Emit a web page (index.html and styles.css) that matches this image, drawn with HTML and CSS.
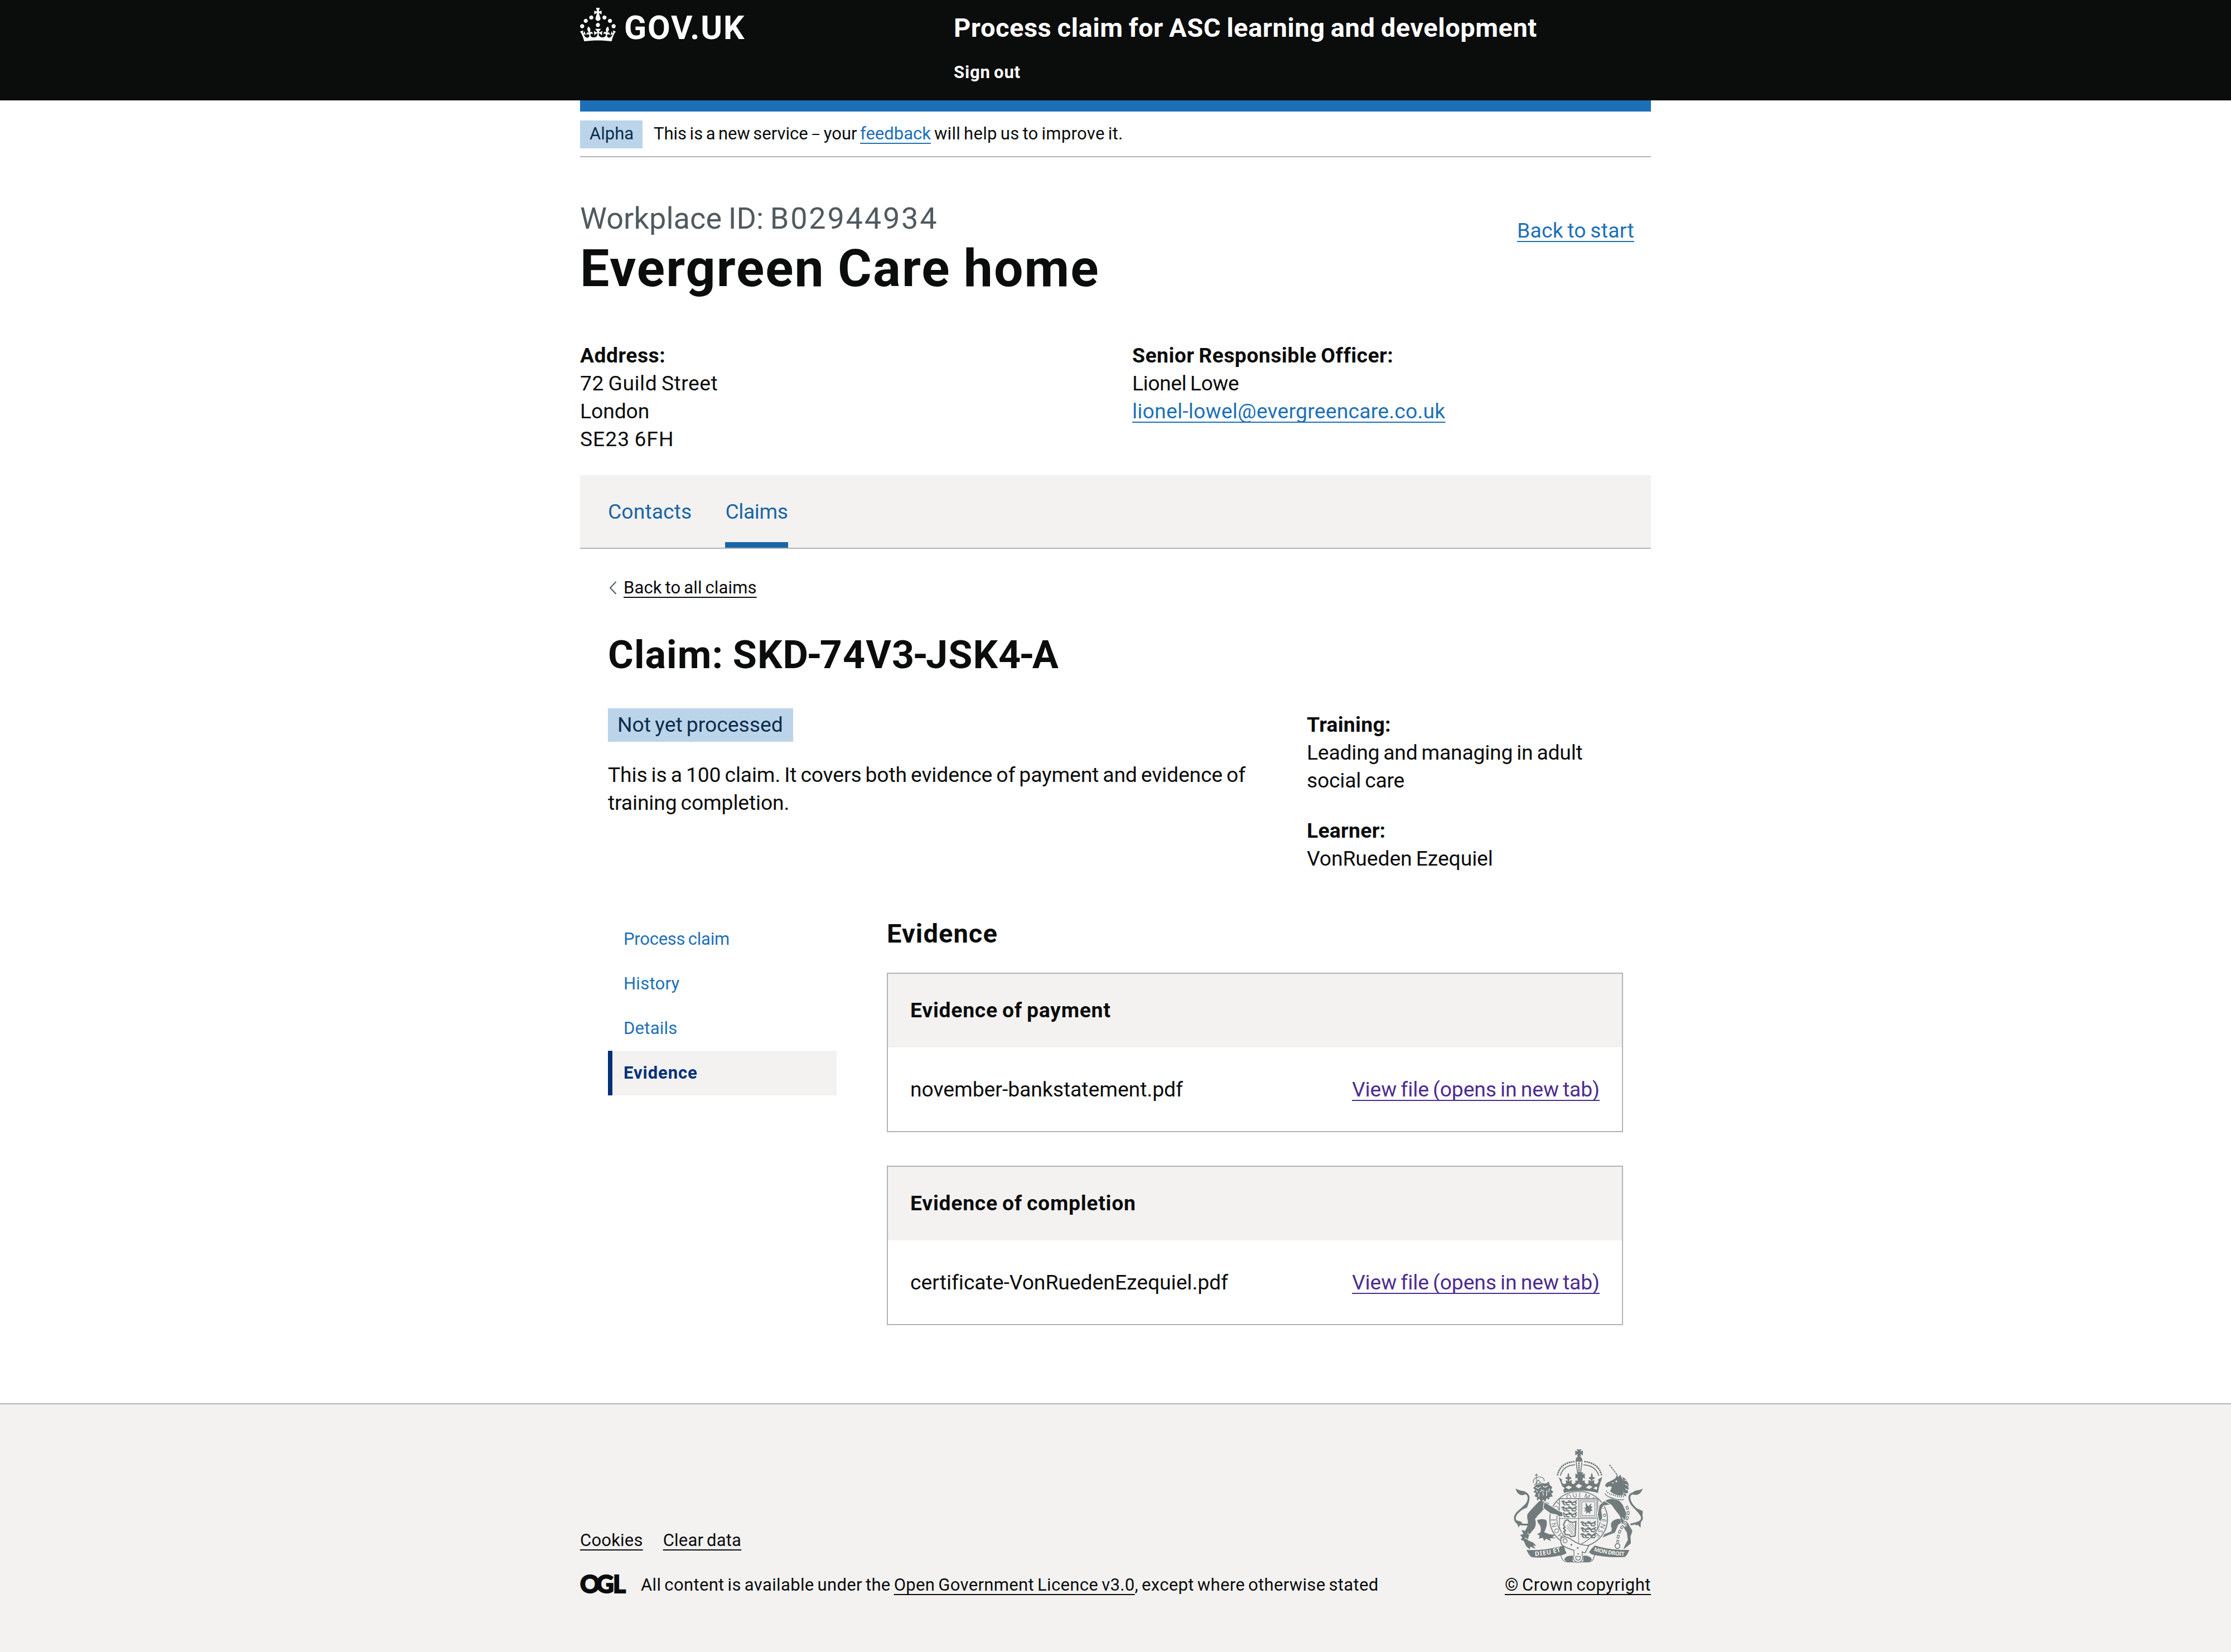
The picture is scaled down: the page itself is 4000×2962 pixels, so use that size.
FILE: index.html
```html
<!DOCTYPE html>
<html lang="en">
<head>
<meta charset="utf-8">
<title>Claim SKD-74V3-JSK4-A</title>
<link rel="stylesheet" href="styles.css">
</head>
<body>
<header class="header">
  <div class="container header-inner">
    <a class="logo" href="#">
      <svg class="logo-crown" viewBox="0 0 32 30" aria-hidden="true"><path fill="currentColor" d="M22.6 10.4c-1 .4-2-.1-2.4-1-.4-.9.1-2 1-2.4.9-.4 2 .1 2.4 1s-.1 2-1 2.4m-5.9 6.7c-.9.4-2-.1-2.4-1-.4-.9.1-2 1-2.4.9-.4 2 .1 2.4 1s-.1 2-1 2.4m10.8-3.7c-1 .4-2-.1-2.4-1-.4-.9.1-2 1-2.4.9-.4 2 .1 2.4 1s0 2-1 2.4m3.3 4.8c-1 .4-2-.1-2.4-1-.4-.9.1-2 1-2.4.9-.4 2 .1 2.4 1s-.1 2-1 2.4M17 4.7l2.3 1.2V2.5l-2.3.7-.2-.2.9-3h-3.4l.9 3-.2.2c-.1.1-2.3-.7-2.3-.7v3.4L15 4.7c.1.1.1.2.2.2l-1.3 4c-.1.2-.1.4-.1.6 0 1.1.8 2 1.9 2.2h.7c1-.2 1.9-1.1 1.9-2.1 0-.2 0-.4-.1-.6l-1.3-4c-.1-.2 0-.2.1-.3m-7.6 5.7c.9.4 2-.1 2.4-1 .4-.9-.1-2-1-2.4-.9-.4-2 .1-2.4 1s0 2 1 2.4m-5 3c.9.4 2-.1 2.4-1 .4-.9-.1-2-1-2.4-.9-.4-2 .1-2.4 1s.1 2 1 2.4m-3.2 4.8c.9.4 2-.1 2.4-1 .4-.9-.1-2-1-2.4-.9-.4-2 .1-2.4 1s0 2 1 2.4m14.8 11c4.4 0 8.6.3 12.3.8 1.1-4.5 2.4-7 3.7-8.8l-2.5-.9c.2 1.3.3 1.9 0 2.7-.4-.4-.8-1.1-1.1-2.3l-1.2 4c.7-.5 1.3-.8 2-.9-1.1 2.5-2.6 3.1-3.5 3-1.1-.2-1.7-1.2-1.5-2.1.3-1.2 1.5-1.5 2.1-.1 1.1-2.3-.8-3-2-2.3 1.9-1.9 2.1-3.5.6-5.6-2.1 1.6-2.1 3.2-1.2 5.5-1.2-1.4-3.2-.6-2.5 1.6.9-1.4 2.1-.5 1.9.8-.2 1.1-1.7 2.1-3.5 1.9-2.7-.2-2.9-2.1-2.9-3.6.7-.1 1.9.5 2.9 1.9l.4-4.3c-1.1 1.1-2.1 1.4-3.2 1.4.4-1.2 2.1-3 2.1-3h-5.4s1.7 1.9 2.1 3c-1.1 0-2.1-.2-3.2-1.4l.4 4.3c1-1.4 2.2-2 2.9-1.9-.1 1.5-.2 3.4-2.9 3.6-1.9.2-3.4-.8-3.5-1.9-.2-1.3 1-2.2 1.9-.8.7-2.3-1.2-3-2.5-1.6.9-2.2.9-3.9-1.2-5.5-1.5 2-1.3 3.7.6 5.6-1.2-.7-3.1 0-2 2.3.6-1.4 1.8-1.1 2.1.1.2.9-.3 1.9-1.5 2.1-.9.2-2.4-.5-3.5-3 .6 0 1.2.3 2 .9l-1.2-4c-.3 1.1-.7 1.9-1.1 2.3-.3-.8-.2-1.4 0-2.7l-2.9.9C1.3 23 2.6 25.5 3.7 30c3.7-.5 7.9-.8 12.3-.8"/></svg>
      <span class="logo-text">GOV.UK</span>
    </a>
    <div class="header-content">
      <a class="service-name" href="#">Process claim for ASC learning and development</a>
      <a class="header-link" href="#">Sign out</a>
    </div>
  </div>
</header>

<div class="container">
  <div class="phase-bar"></div>
  <div class="phase-banner">
    <strong class="tag tag-small">Alpha</strong>
    <span class="phase-text">This is a new service <span class="dash">–</span> your <a class="link" href="#">feedback</a><span class="phase-tail"> will help us to improve it.</span></span>
  </div>

  <main>
    <div class="org-head">
      <div>
        <p class="caption">Workplace ID: <span class="workplace-id">B02944934</span></p>
        <h1 class="org-name">Evergreen Care home</h1>
      </div>
      <a class="link back-start" href="#">Back to start</a>
    </div>

    <div class="org-details">
      <p><b>Address:</b><br><span class="wide">72 Guild Street</span><br>London<br><span class="postcode">SE23 6FH</span></p>
      <p><b>Senior Responsible Officer:</b><br><span class="person">Lionel Lowe</span><br><a class="link email" href="#">lionel-lowel@evergreencare.co.uk</a></p>
    </div>

    <nav class="tabs">
      <a class="tab" href="#">Contacts</a>
      <a class="tab tab-current" href="#">Claims</a>
    </nav>

    <div class="panel">
      <a class="back-link" href="#">
        <svg class="chevron" viewBox="0 0 14 24" aria-hidden="true"><path d="M12.500 1 2 12l10.500 11" fill="none" stroke="#505a5f" stroke-width="2"/></svg>
        <span class="back-text">Back to all claims</span>
      </a>
      <h2 class="claim-title">Claim: SKD<span class="hyphen">-</span>74V3<span class="hyphen">-</span>JSK4<span class="hyphen">-</span>A</h2>

      <div class="claim-summary">
        <div class="claim-status">
          <strong class="tag">Not yet processed</strong>
          <p class="claim-about">This is a 100 claim. It covers both evidence of payment and evidence of training completion.</p>
        </div>
        <div class="claim-meta">
          <p><b class="meta-label">Training:</b><br><span class="course">Leading and managing in adult social care</span></p>
          <p><b class="meta-label">Learner:</b><br>VonRueden Ezequiel</p>
        </div>
      </div>

      <div class="claim-body">
        <nav class="side-nav">
          <a class="side-item side-first" href="#">Process claim</a>
          <a class="side-item" href="#">History</a>
          <a class="side-item" href="#">Details</a>
          <a class="side-item side-current" href="#">Evidence</a>
        </nav>
        <section class="evidence">
          <h3 class="section-title">Evidence</h3>
          <div class="card">
            <h4 class="card-title">Evidence of payment</h4>
            <div class="card-row"><span>november-bankstatement.pdf</span><a class="link visited" href="#">View file (opens in new tab)</a></div>
          </div>
          <div class="card">
            <h4 class="card-title">Evidence of completion</h4>
            <div class="card-row"><span>certificate-VonRuedenEzequiel.pdf</span><a class="link visited" href="#">View file (opens in new tab)</a></div>
          </div>
        </section>
      </div>
    </div>
  </main>
</div>

<footer class="footer">
  <div class="container footer-inner">
    <div class="footer-left">
      <div class="footer-links"><a class="footer-link" href="#">Cookies</a><a class="footer-link" href="#">Clear data</a></div>
      <div class="licence"><span class="ogl">O<span class="ogl-end">GL</span></span><span class="licence-text">All content is available under the <a class="footer-link" href="#">Open Government Licence v3.0</a>, except where otherwise stated</span></div>
    </div>
    <div class="footer-right">
      <svg class="arms" viewBox="162 112 696 612" aria-hidden="true">
        <defs>
          <path id="motto" d="M431 579A124 118 0 1 1 591 579"/>
          <path id="ribbon-left" d="M276 688Q350 684 420 662"/>
          <path id="ribbon-right" d="M592 660Q670 684 764 687"/>
          <g id="lions" fill="none" stroke="#717b7c" stroke-width="7" stroke-linecap="round">
            <path id="passant" d="M3 7q8-6 14 2l8 4q14-6 30-1 10 2 16-4l10-5M12 4l-2 13 10 8M26 12l4 12 12 1M54 12l6 12 16 1M74 9l6 8M40 3l12 4"/>
            <use href="#passant" y="32"/>
            <use href="#passant" y="64"/>
          </g>
        </defs>

        <!-- crown -->
        <g fill="#717b7c">
          <path d="M499 114h29l-9 13 15-7v26l-15-7 6 12h-23l6-12-15 7v-26l15 7z"/>
          <path d="M513 150c14 4 20 16 18 30h-36c-2-14 4-26 18-30z"/>
          <path d="M400 262l22 14c-4 12 0 24 12 24 10 0 14-10 6-18 8-4 12 0 14 6-2-12-4-18-14-14 0-12 8-14 12-10-2-10 0-16 4-24 4 8 6 14 4 24 6-4 12-2 12 10-8-4-12 2-12 14 6-8 10-10 16-6-6 10-2 18 6 18 10 0 14-10 12-20l12 4-2-18-10 6v-28l12 6-4-12h34l-4 12 12-6v28l-10-6-2 18 12-4c-2 10 2 20 12 20 8 0 12-8 6-18 6-4 10-2 16 6 0-12-4-18-12-14 0-12 6-14 12-10-2-10 0-16 4-24 4 8 6 14 4 24 4-4 12-2 12 10-10-4-12 2-14 14 2-6 6-10 14-6-8 8-4 18 6 18 12 0 16-12 12-24l22-14c-4 22-18 46-22 86-60-16-124-16-184 0-6-38-22-60-28-86z"/>
        </g>
        <g fill="none" stroke="#717b7c">
          <path stroke-width="9" stroke-dasharray="1 11" stroke-linecap="round" d="M398 250C408 206 442 182 490 180M634 250C622 206 586 182 538 180M513 188v50"/>
          <path stroke-width="5" d="M412 256C424 214 456 198 492 197M620 256C606 214 574 198 536 197M498 182l7 56M529 182l-7 56"/>
          <path stroke-width="6" d="M677 197l44 58" stroke-dasharray="10 4"/>
          <path stroke-width="5" d="M272 306q24-14 52-8M268 294c-8-36 62-44 58-8M284 244v54M276 253h16M280 300l14-22 16 20" stroke-dasharray="7 2"/>
          <path stroke-width="10" d="M240 518c-38 4-72-2-72-36 2-38 74-56 74-106 0-24-20-30-32-22M790 518c34-6 62-12 62-36-4-36-68-62-68-108 0-20 16-26 28-20"/>
        </g>

        <g fill="#717b7c">
          <!-- tail tufts -->
          <path d="M212 360c-18 2-34-10-40-36 16 10 30 12 44 14l20 12zM246 392l-12 34-52 24 30-30zM180 496l-4 8 12 30 10-18 12 4-6-16zM812 358c18 4 36-8 44-34-16 10-28 10-40 12l-20 12zM790 404l24 22 42 20-2 36-16-26zM846 500l-2 36-14-16-14 4 8-20z"/>
          <!-- lion -->
          <path d="M266 322l18-18 56-8 12-10 2 18 16 14-8 12 14 14-12 8 8 16-16 2-6 16-10-10-10 20-10-12-10 16-10-20-14 10 2-18-14-6 8-16-14-6 10-12z"/>
          <path d="M300 392q30 0 52 12v20q-30 6-42 28-26 22-32 40 10 38-16 60-26 28-22 52l28 12 16 18-18-4 14 18-30-10-2 14-20-18-12-28-16-6 8-12-12-14 18-4-10-22 18 4q18-22 16-52-6-22-2-38 26-32 64-70z"/>
          <path d="M288 494q32-10 50 2 8 24-12 64l26 10 32 4-14 12 22 6-36 0 6 16-26-14-10 12-8-16-22 4 6-16-14-8 18-10q8-30-14-52z"/>
          <!-- unicorn -->
          <path d="M652 310l10-16q28-12 46-24l10-20 4 14 14-14 6 16q18 24 14 64-4 30-16 38-34-8-60-28l10-24-18-4-4 8z"/>
          <path d="M746 262q30 14 36 50l-6-2 6 20-8-2 4 22-10-2-2 20-10-8-10 18q20-50 0-116z"/>
          <path d="M636 408q24-32 70-28 36 10 50 50 20 40 14 70l30 52q-4 18-10 30l2 38-24 20-16 12 8-22 16-30-6-40q-22-30-32-60 2-22-16-42-22-28-32-44-26-6-46 2l-10 24 6 38-14 22-10-30 2-40z"/>
          <path d="M736 488q-28-2-46 16-10 16 0 36l-4 16-36 14-10 18 28-12 38-14 18-42 14-10z"/>
        </g>
        <g fill="none" stroke="#f3f2f1" stroke-width="4">
          <path d="M280 318l14 6 12-8M318 312l14 6 12-8M304 344l8-12 14 8M318 344l4 18M298 350l-2 20M340 334l-2 30M354 324l-4 20M284 334l6 10M276 488q20-8 36-2M236 566l22 14M222 590l22 12M758 278l16 8M762 302l14 6M762 326l12 6M758 350l10 6M690 294h10M744 480q18 20 24 50"/>
          <circle cx="714" cy="286" r="3"/>
        </g>
        <g fill="#f3f2f1"><path d="M440 318l18-9 18 9-18 11zM494 311l18-12 18 12-18 13zM550 318l18-11 18 9-18 12zM590 324l14-10 8 6-4 12zM420 324l-6-6 12-4 10 10-8 8z"/></g>

        <!-- garter and shield -->
        <ellipse cx="511" cy="489" rx="155" ry="149" fill="#f3f2f1" stroke="#717b7c" stroke-width="5"/>
        <ellipse cx="511" cy="489" rx="117" ry="111" fill="#f3f2f1" stroke="#717b7c" stroke-width="4"/>
        <text class="arms-motto"><textPath href="#motto" textLength="580">HONI SOIT QUI MAL Y PENSE</textPath></text>
        <path d="M408 379h206v150c-4 46-54 76-103 102-49-26-99-56-103-102z" fill="#f3f2f1" stroke="#717b7c" stroke-width="4"/>
        <path d="M408 486h206M511 379v250M519 387h88v92h-88zM528 396h70v74h-70z" fill="none" stroke="#717b7c" stroke-width="3"/>
        <use href="#lions" x="418" y="388"/>
        <use href="#lions" x="521" y="500"/>
        <path d="M548 404q10 0 8 10l10 6q8-14 14-14l-4 14 10 2-8 12 8 8-12 6-2 14-8-10-14 8 4-14-14 2 10-12-12-6 12-4zM582 398l4 18" fill="#717b7c"/>
        <path d="M438 500q14-14 22 2 20 8 36 0l-4 78-24 4-6-10-22-2-8-16 8-4-10-14 8-4-8-14z" fill="#f3f2f1" stroke="#717b7c" stroke-width="7"/>
        <path d="M448 520l36 48M448 534l30 40M456 514l30 40M464 510l24 32M474 510l14 18" stroke="#717b7c" stroke-width="3"/>

        <!-- supporters' forelegs -->
        <path d="M326 396l44 26 30 20 24 10 4 22-24 2-10-10-34-6-40-30z" fill="#717b7c" stroke="#f3f2f1" stroke-width="4"/>
        <path d="M648 390l-26 24-10 52 8 30 10 6 10-20-6-42 10-22 40-6z" fill="#717b7c" stroke="#f3f2f1" stroke-width="4"/>
        <path d="M656 338q8 24 40 28 30 12 58 10" fill="none" stroke="#f3f2f1" stroke-width="26"/>
        <path d="M660 336q8 18 40 24 26 10 54 8" fill="none" stroke="#717b7c" stroke-width="8" stroke-dasharray="5 6"/>
        <path d="M652 350q10 20 42 26 30 12 62 8" fill="none" stroke="#717b7c" stroke-width="4"/>
        <path d="M768 420c20 30 6 80-26 116-14 22-22 50-20 82" fill="none" stroke="#f3f2f1" stroke-width="19"/>
        <path d="M768 420c20 30 6 80-26 116-14 22-22 50-20 82" fill="none" stroke="#717b7c" stroke-width="14" stroke-dasharray="20 8"/>
        <path d="M768 420c20 30 6 80-26 116-14 22-22 50-20 82" fill="none" stroke="#f3f2f1" stroke-width="6" stroke-dasharray="12 16" stroke-dashoffset="-4"/>
        <circle cx="720" cy="634" r="13" fill="#f3f2f1" stroke="#717b7c" stroke-width="5"/>

        <!-- strap and ribbons -->
        <path d="M416 596c10-18 36-12 54 2 30 22 52 30 96 34l-20 38c-50-6-84-18-118-36-10-8-16-22-12-38z" fill="#f3f2f1" stroke="#717b7c" stroke-width="5"/>
        <circle cx="438" cy="606" r="11" fill="none" stroke="#717b7c" stroke-width="4"/>
        <path d="M412 674c8 28 14 44 36 46h118c22-2 28-20 32-46" fill="none" stroke="#717b7c" stroke-width="4"/>
        <path d="M230 655c70 4 140-6 202-24l6 24 8 18-18 8c-50 12-104 18-168 14-16-10-20-24-30-40zM784 655c-66 2-128-6-186-24l-18 18-14 18 16 12c54 12 104 18 176 14 14-8 18-22 26-38zM434 706c4-14 22-22 46-20v32c-20 4-40 2-46-12zM582 706c-4-14-22-22-46-20v32c20 4 40 2 46-12z" fill="#717b7c"/>
        <path d="M486 656v28c-8 14 0 36 22 38 22-2 30-24 22-38v-22M496 690c-2 14 4 20 12 20s14-6 12-20z" fill="#f3f2f1" stroke="#717b7c" stroke-width="4"/>
        <circle cx="472" cy="627" r="5" fill="#717b7c"/><circle cx="506" cy="644" r="5" fill="#717b7c"/><circle cx="508" cy="676" r="4" fill="#717b7c"/>
        <text class="arms-ribbon"><textPath href="#ribbon-left" textLength="142">DIEU ET</textPath></text>
        <text class="arms-ribbon arms-ribbon-small"><textPath href="#ribbon-right" textLength="168">MON DROIT</textPath></text>
      </svg>
      <a class="footer-link crown-copyright" href="#">© Crown copyright</a>
    </div>
  </div>
</footer>
</body>
</html>
```
FILE: styles.css
```css
* { box-sizing: border-box; }
body { margin: 0; background: #fff; color: #0b0c0c; font-family: Roboto, "Noto Sans", sans-serif; font-size: 37.25px; line-height: 50px; word-spacing: -2px; letter-spacing: -0.08px; min-height: 2962px; display: flex; flex-direction: column; }
h1, h2, h3, h4, p { margin: 0; }
a { color: inherit; text-decoration: none; }
b { letter-spacing: 0.5px; }
.container { width: 1920px; margin: 0 auto; }

.header { height: 180px; background: #0b0c0c; color: #fff; }
.header-inner { display: flex; }
.logo { display: flex; gap: 15px; width: 670px; padding-top: 14px; }
.logo-crown { width: 64px; height: 60px; }
.logo-text { font-size: 59px; font-weight: 700; line-height: 72px; letter-spacing: 1.9px; }
.header-content { display: flex; flex-direction: column; align-items: flex-start; padding-top: 20px; gap: 30px; }
.service-name { font-size: 47px; font-weight: 700; line-height: 60px; letter-spacing: 0.54px; }
.header-link { font-size: 31px; font-weight: 700; line-height: 40px; letter-spacing: 0.8px; }

.phase-bar { height: 20px; background: #1d70b8; }
.phase-banner { display: flex; gap: 20px; padding: 16px 0 14px; border-bottom: 2px solid #b1b4b6; font-size: 31px; line-height: 48px; letter-spacing: 0; }
.phase-text { word-spacing: -2.2px; }
.phase-tail { letter-spacing: 0.3px; word-spacing: -2px; }
.dash { font-size: 26px; }
.tag { display: inline-block; width: 332px; height: 60px; padding: 0 17px; background: #bbd4ea; color: #0c2d4a; font-weight: 400; line-height: 59px; letter-spacing: 0; white-space: nowrap; }
.tag-small { width: 112px; height: 50px; line-height: 48px; }

.link { color: #1d70b8; text-decoration: underline 2px; text-underline-offset: 6px; text-decoration-skip-ink: none; }
.visited { color: #4c2c92; letter-spacing: -0.08px; }

.org-head { display: flex; justify-content: space-between; padding: 80px 30px 0 0; }
.caption { color: #505a5f; font-size: 54px; line-height: 60px; letter-spacing: 0.1px; }
.workplace-id { letter-spacing: 2.8px; }
.org-name { margin-top: 10px; font-size: 93px; line-height: 100px; letter-spacing: 2.1px; }
.back-start { margin-top: 26px; letter-spacing: 0.25px; }
.org-details { display: grid; grid-template-columns: 990px 1fr; margin: 80px 0 40px; }
.wide { letter-spacing: 0.5px; }
.postcode { letter-spacing: 1px; }
.person { letter-spacing: -0.45px; }
.email { letter-spacing: 0.24px; }

.tabs { display: flex; gap: 60px; height: 132px; padding: 0 50px; background: #f3f2f1; border-bottom: 2px solid #b1b4b6; color: #1a65a6; letter-spacing: 0.12px; }
.tab { padding-top: 40px; }
.tab-current { border-bottom: 10px solid #1a65a6; letter-spacing: -0.4px; }

.panel { padding: 50px 50px 0; }
.back-link { display: flex; align-items: center; gap: 12px; height: 40px; font-size: 31px; line-height: 40px; letter-spacing: 0.15px; }
.chevron { width: 14px; height: 24px; margin-left: 2px; }
.back-text { text-decoration: underline 2px; text-underline-offset: 6px; text-decoration-skip-ink: none; }
.claim-title { margin-top: 60px; font-size: 70px; line-height: 80px; letter-spacing: 1.1px; }
.hyphen { margin-left: -4px; letter-spacing: -4px; }

.claim-summary { display: grid; grid-template-columns: 1213px 566px; column-gap: 40px; margin-top: 56px; }
.claim-status { display: flex; flex-direction: column; gap: 34px; }
.claim-about { letter-spacing: -0.13px; }
.claim-meta { display: flex; flex-direction: column; gap: 40px; padding-top: 4px; }
.meta-label { letter-spacing: 0.3px; }
.course { letter-spacing: -0.2px; }

.claim-body { display: grid; grid-template-columns: 410px 1320px; column-gap: 90px; margin-top: 80px; }
.side-nav { display: flex; flex-direction: column; font-size: 31px; line-height: 79px; letter-spacing: 0.25px; color: #1d70b8; }
.side-item { height: 80px; padding-left: 20px; border-left: 8px solid transparent; }
.side-first { letter-spacing: -0.25px; }
.side-current { background: #f3f2f1; border-color: #003078; color: #003078; font-weight: 700; letter-spacing: 0.9px; }
.evidence { display: flex; flex-direction: column; }
.section-title { margin-bottom: 40px; font-size: 47px; line-height: 60px; letter-spacing: 1.1px; }
.card { height: 286px; border: 2px solid #b1b4b6; }
.card + .card { margin-top: 60px; }
.card-title { height: 132px; padding: 40px; background: #f3f2f1; font-size: 37.25px; line-height: 50px; letter-spacing: 0.78px; }
.card-row { display: flex; justify-content: space-between; padding: 50px 40px; letter-spacing: -0.02px; }

.footer { flex: 1; margin-top: 140px; padding-top: 80px; background: #f3f2f1; border-top: 2px solid #b1b4b6; font-size: 31px; line-height: 40px; letter-spacing: 0.34px; }
.footer-inner { display: flex; justify-content: space-between; align-items: flex-end; }
.footer-left { display: flex; flex-direction: column; gap: 40px; }
.footer-links { display: flex; gap: 36px; letter-spacing: 0.2px; }
.footer-link { text-decoration: underline 2px; text-underline-offset: 6px; text-decoration-skip-ink: none; }
.licence { display: flex; height: 40px; }
.ogl { width: 109px; font-family: Lato, sans-serif; font-size: 44px; font-weight: 900; line-height: 34px; letter-spacing: -7px; -webkit-text-stroke: 2px #0b0c0c; }
.ogl-end { letter-spacing: -1.5px; }
.footer-right { display: flex; flex-direction: column; align-items: flex-end; gap: 20px; }
.crown-copyright { letter-spacing: 0.55px; }
.arms { width: 232px; height: 204px; margin-right: 14px; }
.arms-motto { font: 400 34px "Noto Sans", sans-serif; fill: #717b7c; }
.arms-ribbon { font: 700 34px "Noto Sans", sans-serif; fill: #f3f2f1; }
.arms-ribbon-small { font-size: 30px; }
```
